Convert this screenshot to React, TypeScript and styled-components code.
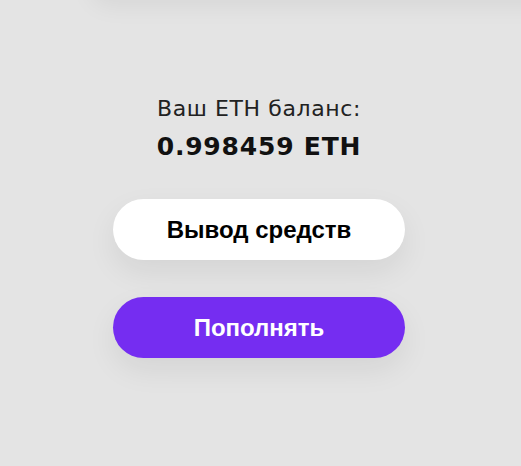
import styled, { createGlobalStyle } from "styled-components";

const GlobalStyle = createGlobalStyle`
  html, body {
    margin: 0;
    padding: 0;
    background: #e4e4e4;
  }
  body {
    font-family: "DejaVu Sans", "Open Sans", sans-serif;
    color: #1c1c1c;
  }
`;

const Page = styled.div`
  position: relative;
  width: 521px;
  height: 466px;
  overflow: hidden;
  background: #e4e4e4;
`;

const TopShade = styled.div`
  position: absolute;
  top: -40px;
  left: 90px;
  right: -40px;
  height: 40px;
  border-radius: 20px;
  box-shadow: 0 6px 24px rgba(0, 0, 0, 0.06);
`;

const Panel = styled.div`
  display: flex;
  flex-direction: column;
  align-items: center;
  padding-top: 94px;
  padding-right: 3px;
`;

const Label = styled.div`
  font-size: 22px;
  line-height: 30px;
  font-weight: 400;
  letter-spacing: 0.6px;
  color: #222;
`;

const Balance = styled.div`
  margin-top: 6px;
  font-size: 25px;
  line-height: 34px;
  font-weight: 700;
  letter-spacing: 0.8px;
  color: #111;
`;

const Actions = styled.div`
  display: flex;
  flex-direction: column;
  gap: 37px;
  margin-top: 35px;
`;

const ActionButton = styled.button<{ $primary?: boolean }>`
  width: 292px;
  height: 61px;
  border: none;
  border-radius: 31px;
  background: ${(p) => (p.$primary ? "#752df1" : "#ffffff")};
  color: ${(p) => (p.$primary ? "#ffffff" : "#000000")};
  font-family: "Liberation Sans", Arial, sans-serif;
  font-size: 24px;
  font-weight: 700;
  padding: 0;
  cursor: pointer;
  box-shadow: 0 12px 30px rgba(0, 0, 0, 0.07);
`;

export default function App() {
  return (
    <Page>
      <GlobalStyle />
      <TopShade />
      <Panel>
        <Label>Ваш ЕТН баланс:</Label>
        <Balance>0.998459 ETH</Balance>
        <Actions>
          <ActionButton>Вывод средств</ActionButton>
          <ActionButton $primary>Пополнять</ActionButton>
        </Actions>
      </Panel>
    </Page>
  );
}
